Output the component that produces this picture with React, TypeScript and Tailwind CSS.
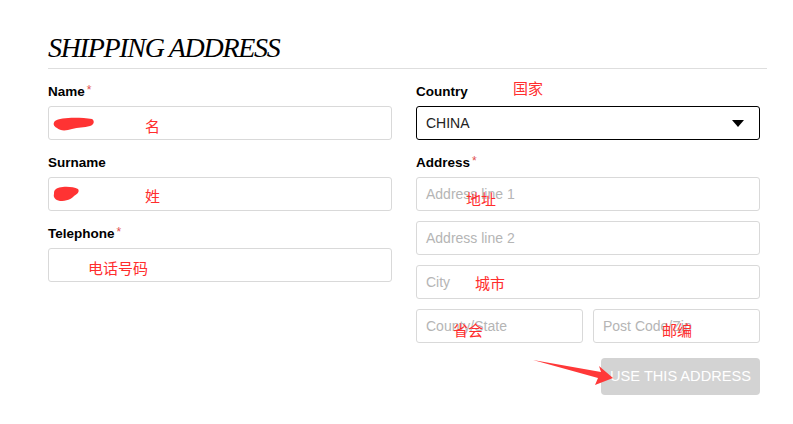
import React from "react";

const cjk = { fontFamily: '"Noto Sans CJK SC", "Noto Sans", sans-serif' };

function Label({ text, req }: { text: string; req?: boolean }) {
  return (
    <div className="h-[21px] flex items-start text-[13.5px] font-bold text-black leading-[13px]">
      {text}
      {req && <span className="text-[#e05050] font-normal text-[12px] ml-[2px] -mt-[1px]">*</span>}
    </div>
  );
}

function Input({ ph, className = "" }: { ph?: string; className?: string }) {
  return (
    <div className={`h-[34px] border border-[#d9d9d9] rounded-[3px] bg-white flex items-center px-[9px] text-[14px] text-[#b5b5b5] ${className}`}>
      {ph}
    </div>
  );
}

function Note({ text, x, y }: { text: string; x: number; y: number }) {
  return (
    <span
      className="absolute text-[15px] leading-none text-[#ff2d2d] whitespace-nowrap"
      style={{ ...cjk, left: x, top: y }}
    >
      {text}
    </span>
  );
}

export default function App() {
  return (
    <div className="relative w-[793px] h-[424px] bg-white overflow-hidden" style={{ fontFamily: '"Liberation Sans", Arial, sans-serif' }}>
      <div className="pl-[48px] pt-[33px] w-[767px]">
        <h1
          className="italic text-[28px] leading-[30px] text-black tracking-[-1.3px]"
          style={{ fontFamily: '"Liberation Serif", "Times New Roman", serif' }}
        >
          SHIPPING ADDRESS
        </h1>
        <div className="mt-[5px] h-px bg-[#dedede]" />
        <div className="grid grid-cols-[344px_344px] gap-x-[24px] mt-[16px]">
          <div className="flex flex-col">
            <Label text="Name" req />
            <Input />
            <div className="h-[16px]" />
            <Label text="Surname" />
            <Input />
            <div className="h-[16px]" />
            <Label text="Telephone" req />
            <Input />
          </div>
          <div className="flex flex-col">
            <Label text="Country" />
            <div className="h-[34px] border border-black rounded-[3px] bg-white flex items-center justify-between pl-[9px] pr-[15px] text-[14px] text-[#222]">
              <span>CHINA</span>
              <svg width="12" height="7" viewBox="0 0 12 7">
                <path d="M0 0 L12 0 L6 7 Z" fill="#000" />
              </svg>
            </div>
            <div className="h-[16px]" />
            <Label text="Address" req />
            <div className="flex flex-col gap-[10px]">
              <Input ph="Address line 1" />
              <Input ph="Address line 2" />
              <Input ph="City" />
              <div className="grid grid-cols-[167px_167px] gap-x-[10px]">
                <Input ph="County/State" />
                <Input ph="Post Code/Zip" />
              </div>
            </div>
            <div className="flex justify-end mt-[15px]">
              <button className="w-[159px] h-[37px] rounded-[4px] bg-[#d3d3d3] text-white text-[14.6px]">
                USE THIS ADDRESS
              </button>
            </div>
          </div>
        </div>
      </div>

      {/* red scribbles */}
      <svg className="absolute left-0 top-0 pointer-events-none" width="793" height="424">
        <path d="M55 121 C60 117 80 117 92 119 C95 121 94 125 90 126 C84 128 78 127 72 129 C66 131 60 131 57 128 C53 126 53 123 55 121 Z" fill="#ff3333" />
        <path d="M55 190 C58 186 72 186 78 189 C80 192 77 194 74 196 C72 199 66 201 60 201 C55 200 53 197 54 194 C54 192 54 191 55 190 Z" fill="#ff3333" />
        <polygon points="533,360 601,372 599,366 613,378 595,385 598,378" fill="#ff3838" />
      </svg>

      <Note text="名" x={145} y={118} />
      <Note text="国家" x={513} y={80} />
      <Note text="姓" x={145} y={188} />
      <Note text="电话号码" x={88} y={260} />
      <Note text="地址" x={466} y={191} />
      <Note text="城市" x={475} y={275} />
      <Note text="省会" x={453} y={322} />
      <Note text="邮编" x={662} y={322} />
    </div>
  );
}
